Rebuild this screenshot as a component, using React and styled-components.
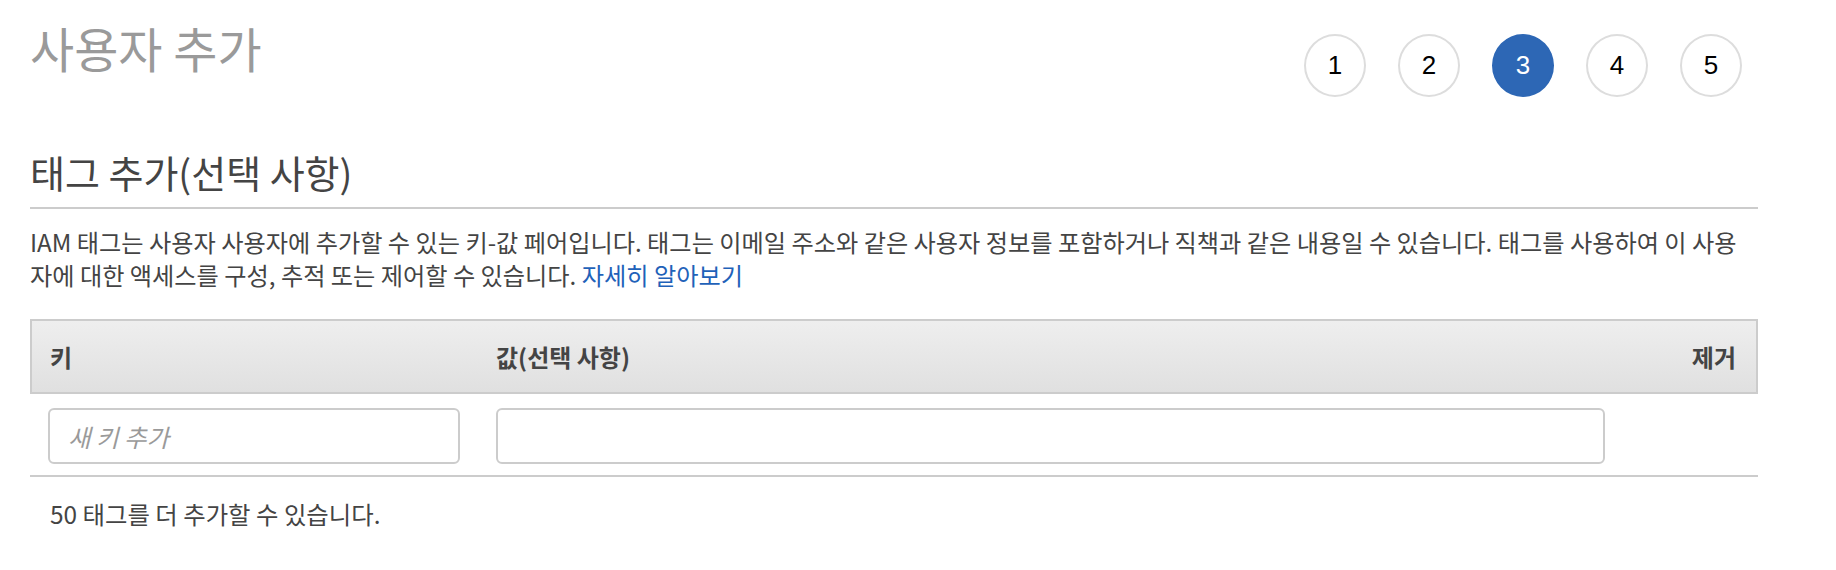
import styled, { createGlobalStyle } from 'styled-components';

const GlobalStyle = createGlobalStyle`
  html, body {
    margin: 0;
    padding: 0;
    background: #ffffff;
  }
  body {
    font-family: "Noto Sans CJK KR", "Noto Sans", sans-serif;
    color: #444444;
  }
`;

const Page = styled.main`
  display: flex;
  flex-direction: column;
  padding: 0 78px 0 30px;
`;

const TopBar = styled.header`
  display: flex;
  justify-content: space-between;
  align-items: flex-start;
`;

const PageTitle = styled.h1`
  margin: 18px 0 0;
  font-size: 48px;
  line-height: 58px;
  font-weight: 400;
  color: #9a9a9a;
`;

const Steps = styled.ol`
  display: flex;
  gap: 32px;
  list-style: none;
  margin: 34px 16px 0 0;
  padding: 0;
`;

const Step = styled.li`
  display: flex;
  align-items: center;
  justify-content: center;
  box-sizing: border-box;
  width: 62px;
  height: 63px;
  border-radius: 50%;
  border: 2px solid ${({ $active }) => ($active ? '#2d67b5' : '#dddddd')};
  background: ${({ $active }) => ($active ? '#2d67b5' : '#ffffff')};
  color: ${({ $active }) => ($active ? '#ffffff' : '#000000')};
  font-family: "Liberation Sans", Arial, sans-serif;
  font-size: 26px;
`;

const SectionHeading = styled.h2`
  margin: 51px 0 0;
  padding-bottom: 11px;
  border-bottom: 2px solid #cccccc;
  font-size: 38px;
  line-height: 48px;
  font-weight: 400;
  color: #444444;
`;

const Description = styled.p`
  margin: 16px 0 0;
  font-size: 24.2px;
  line-height: 33px;
  color: #444444;
`;

const Link = styled.a`
  color: #1f62b9;
  text-decoration: none;
`;

const TagTable = styled.div`
  margin-top: 28px;
  display: grid;
  grid-template-columns: 448px minmax(0, 1fr) 135px;
  border-bottom: 2px solid #cccccc;
`;

const HeadCell = styled.div`
  display: flex;
  align-items: center;
  justify-content: ${({ $align }) => ($align === 'right' ? 'flex-end' : 'flex-start')};
  height: 71px;
  padding: 0 ${({ $align }) => ($align === 'right' ? '20px' : '18px')};
  background: linear-gradient(#eeeeee, #e0e0e0);
  border-top: 2px solid #cccccc;
  border-bottom: 2px solid #cccccc;
  border-left: ${({ $first }) => ($first ? '2px solid #cccccc' : 'none')};
  border-right: ${({ $last }) => ($last ? '2px solid #cccccc' : 'none')};
  font-size: 24px;
  font-weight: 700;
  color: #444444;
`;

const BodyCell = styled.div`
  padding: 14px 18px 11px;
`;

const TextInput = styled.input`
  display: block;
  box-sizing: border-box;
  width: 100%;
  height: 56px;
  padding: 0 18px;
  border: 2px solid #cccccc;
  border-radius: 6px;
  background: #ffffff;
  font-family: "Noto Sans CJK KR", "Noto Sans", sans-serif;
  font-size: 24.5px;
  color: #444444;
  outline: none;

  &::placeholder {
    color: #9a9a9a;
    font-style: italic;
  }
`;

const Footnote = styled.p`
  margin: 20px 0 0;
  padding-left: 20px;
  font-size: 24.4px;
  line-height: 33px;
  color: #444444;
`;

export default function App() {
  const steps = [1, 2, 3, 4, 5];

  return (
    <>
      <GlobalStyle />
      <Page>
        <TopBar>
          <PageTitle>사용자 추가</PageTitle>
          <Steps>
            {steps.map((n) => (
              <Step key={n} $active={n === 3}>
                {n}
              </Step>
            ))}
          </Steps>
        </TopBar>

        <SectionHeading>태그 추가(선택 사항)</SectionHeading>
        <Description>
          IAM 태그는 사용자 사용자에 추가할 수 있는 키-값 페어입니다. 태그는 이메일 주소와 같은 사용자 정보를
          포함하거나 직책과 같은 내용일 수 있습니다. 태그를 사용하여 이 사용자에 대한 액세스를 구성, 추적 또는
          제어할 수 있습니다. <Link href="#">자세히 알아보기</Link>
        </Description>

        <TagTable>
          <HeadCell $first>키</HeadCell>
          <HeadCell>값(선택 사항)</HeadCell>
          <HeadCell $last $align="right">제거</HeadCell>
          <BodyCell>
            <TextInput placeholder="새 키 추가" />
          </BodyCell>
          <BodyCell>
            <TextInput />
          </BodyCell>
          <BodyCell />
        </TagTable>

        <Footnote>50 태그를 더 추가할 수 있습니다.</Footnote>
      </Page>
    </>
  );
}
